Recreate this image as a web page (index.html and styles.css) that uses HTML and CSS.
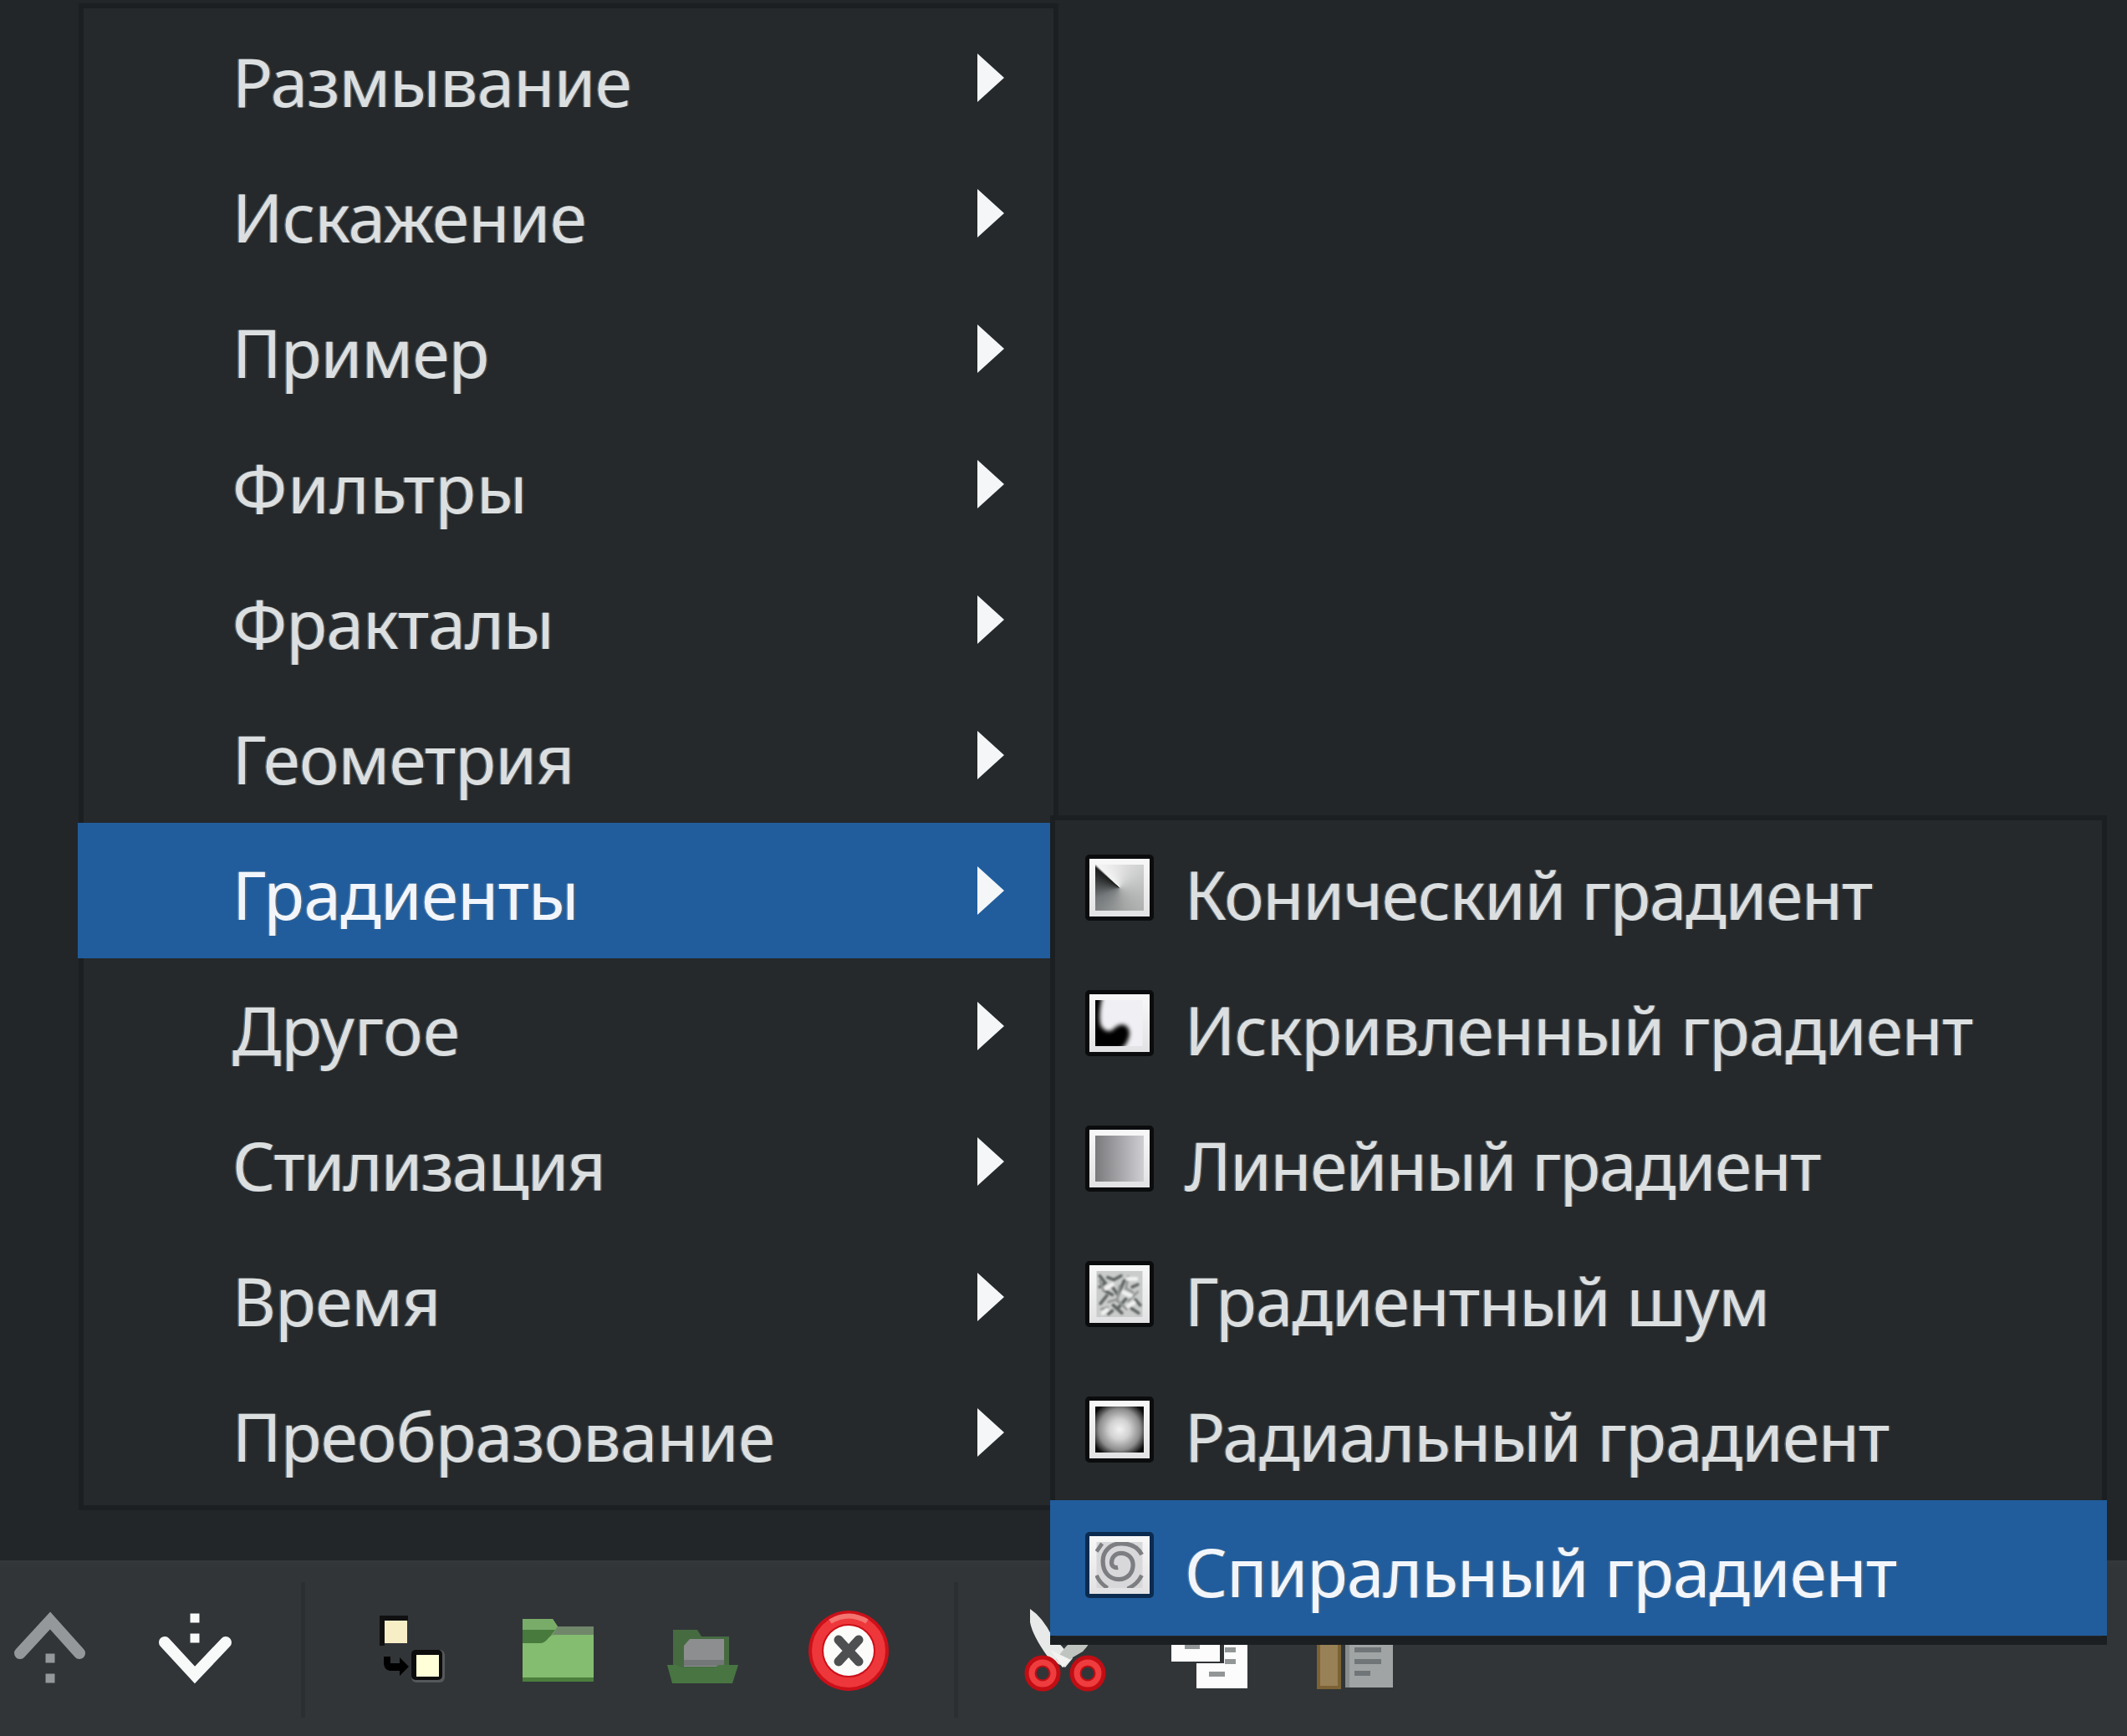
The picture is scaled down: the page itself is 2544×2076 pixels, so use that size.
FILE: index.html
```html
<!DOCTYPE html>
<html lang="ru">
<head>
<meta charset="utf-8">
<title>Градиенты</title>
<link rel="stylesheet" href="styles.css">
</head>
<body>
<div class="workspace"></div>

<div class="toolbar">
  <div class="tool"><svg class="tool-icon" viewBox="0 0 100 100"><path d="M15 53 51 14 86 53" fill="none" stroke="#94989a" stroke-width="14" stroke-linecap="round"/><path d="M45.500 53.500h11v11h-11zM45.500 77.500h11v11h-11z" fill="#94989a"/></svg></div>
  <div class="tool"><svg class="tool-icon" viewBox="0 0 100 100"><path d="M14 40 50 79 87 40" fill="none" stroke="#f8fafa" stroke-width="14" stroke-linecap="round"/><path d="M44.500 5.500h11v11h-11zM44.500 29.500h11v11h-11z" fill="#f8fafa"/></svg></div>
  <div class="separator"></div>
  <div class="tool"><svg class="tool-icon" viewBox="0 0 100 100"><path d="M12 8h34v6H18v30h-6z" fill="#101010"/><path d="M18 14h27v27H18z" fill="#f8eec6"/><rect x="50" y="49" width="40" height="39" rx="6" fill="#55585a"/><rect x="50" y="49" width="37" height="36" rx="5" fill="#0c0c0c"/><path d="M56 55h27v26H56z" fill="#ffffd8"/><path d="M17 57h8v8h11v-7l11 11-11 11v-6H24q-7-2-7-9z" fill="#000"/></svg></div>
  <div class="tool"><svg class="tool-icon" viewBox="0 0 100 100"><path d="M9 12h36l6 9h43v64H9z" fill="#6f9d5f"/><path d="M9 12h36l6 9-9 14H9z" fill="#79ac69"/><path d="M9 25h39l-12 16H9z" fill="#477a3c"/><path d="M51 21h43v10H45z" fill="#70876a"/><path d="M9 41h21q5 0 9-5t10-5h45v51H9z" fill="#84bc70"/><path d="M9 82h85v5H9z" fill="#4c7f3c"/></svg></div>
  <div class="tool"><svg class="tool-icon" viewBox="0 0 100 100"><path d="M15 25h29l5 8h33v40H15z" fill="#466b41"/><path d="M35 36h41v33H28V44z" fill="#8d8e90"/><path d="M28 61h48v7H28z" fill="#747777"/><path d="M8 67h11l6 3h39l6-3h23l-7 22H14z" fill="#487542"/></svg></div>
  <div class="tool"><svg class="tool-icon" viewBox="0 0 100 100"><circle cx="51" cy="50" r="48" fill="#cb1019"/><circle cx="51" cy="50" r="38" fill="none" stroke="#ee373b" stroke-width="12"/><path d="M29 15q22-13 44 0" fill="none" stroke="#f47470" stroke-width="6"/><circle cx="51" cy="50" r="30" fill="#fbfbf9"/><path d="M39 37 63 63M63 37 39 63" stroke="#4d4f51" stroke-width="11" stroke-linecap="round"/></svg></div>
  <div class="separator"></div>
  <div class="tool"><svg class="tool-icon" viewBox="0 0 100 100"><path d="M9 0Q24 10 35 32L60 59 51 70 39 64 30 57Q12 32 9 16z" fill="#e8eae9"/><path d="M93 2Q74 12 65 32L52 45 40 60 48 70 60 58 72 51Q90 32 93 2z" fill="#bfc4c0"/><path d="M33 49 58 61 48 70z" fill="#f2f3f1"/><circle cx="24" cy="77" r="14.500" fill="none" stroke="#c10d13" stroke-width="14"/><circle cx="24" cy="77" r="13" fill="none" stroke="#ef3d3f" stroke-width="7"/><circle cx="78" cy="77" r="14.500" fill="none" stroke="#c10d13" stroke-width="14"/><circle cx="78" cy="77" r="13" fill="none" stroke="#ef3d3f" stroke-width="7"/></svg></div>
  <div class="tool"><svg class="tool-icon" viewBox="0 0 100 100"><path d="M34 35h61v60H34z" fill="#fbfcfb"/><path d="M4 5h63v60H4z" fill="#2f3336"/><path d="M4 5h58v58H4z" fill="#fbfcfb"/><path d="M20 45h18M68 49h13M68 63h13M49 78h19" stroke="#929697" stroke-width="6"/></svg></div>
  <div class="tool"><svg class="tool-icon" viewBox="0 0 100 100"><path d="M4 5h29v91H4z" fill="#7c6234"/><path d="M8 5h21v87H8z" fill="#988057"/><path d="M38 30h57v64H38z" fill="#a1a4a5"/><path d="M38 30h5v64h-5z" fill="#898d8e"/><path d="M49 49h32M49 63h32M49 77h19" stroke="#707577" stroke-width="6"/></svg></div>
</div>

<ul class="menu menu-main">
  <li class="item"><span class="label">Размывание</span><svg class="arrow" viewBox="0 0 36 62"><path d="M2 2 34 31 2 60z"/></svg></li>
  <li class="item"><span class="label">Искажение</span><svg class="arrow" viewBox="0 0 36 62"><path d="M2 2 34 31 2 60z"/></svg></li>
  <li class="item"><span class="label">Пример</span><svg class="arrow" viewBox="0 0 36 62"><path d="M2 2 34 31 2 60z"/></svg></li>
  <li class="item"><span class="label loose">Фильтры</span><svg class="arrow" viewBox="0 0 36 62"><path d="M2 2 34 31 2 60z"/></svg></li>
  <li class="item"><span class="label">Фракталы</span><svg class="arrow" viewBox="0 0 36 62"><path d="M2 2 34 31 2 60z"/></svg></li>
  <li class="item"><span class="label">Геометрия</span><svg class="arrow" viewBox="0 0 36 62"><path d="M2 2 34 31 2 60z"/></svg></li>
  <li class="item selected"><span class="label">Градиенты</span><svg class="arrow" viewBox="0 0 36 62"><path d="M2 2 34 31 2 60z"/></svg></li>
  <li class="item"><span class="label normal">Другое</span><svg class="arrow" viewBox="0 0 36 62"><path d="M2 2 34 31 2 60z"/></svg></li>
  <li class="item"><span class="label tightest">Стилизация</span><svg class="arrow" viewBox="0 0 36 62"><path d="M2 2 34 31 2 60z"/></svg></li>
  <li class="item"><span class="label">Время</span><svg class="arrow" viewBox="0 0 36 62"><path d="M2 2 34 31 2 60z"/></svg></li>
  <li class="item"><span class="label">Преобразование</span><svg class="arrow" viewBox="0 0 36 62"><path d="M2 2 34 31 2 60z"/></svg></li>
</ul>

<ul class="menu menu-sub">
  <li class="item"><span class="thumb conical"></span><span class="label tight">Конический градиент</span></li>
  <li class="item"><span class="thumb"><svg class="art" viewBox="0 0 58 58"><defs><filter id="soft"><feGaussianBlur stdDeviation="3"/></filter></defs><path d="M0 0h58v58H0z" fill="#f0f0f4"/><path d="M-6-6H8Q2 16 5 31 11 42 20 38 30 27 38 33 46 41 36 57L30 62H-6z" fill="#000" filter="url(#soft)"/></svg></span><span class="label">Искривленный градиент</span></li>
  <li class="item"><span class="thumb linear"></span><span class="label tighter">Линейный градиент</span></li>
  <li class="item"><span class="thumb"><svg class="art" viewBox="0 0 58 58"><defs><filter id="grain"><feGaussianBlur stdDeviation="0.9"/></filter></defs><path d="M0 0h58v58H0z" fill="#cacccb"/><g filter="url(#grain)" fill="none" stroke-linecap="round"><path d="M14 8 22 11 31 6M4 6 11 15 4 20M20 20 27 30 35 12M45 20 52 17M5 41 13 31M9 24 20 30M37 35 27 47M44 47 53 53M32 53 21 43M49 36 55 43M15 54 20 50" stroke="#626766" stroke-width="4"/><path d="M4 12 9 25M40 7 37 22 46 27M15 39 25 36 38 48M52 26 40 38M6 48 14 46M29 19 26 38" stroke="#929695" stroke-width="3"/><path d="M40 10 50 10M20 17 12 22M47 40 40 44M8 53 13 49M34 27 43 31" stroke="#f0f1f0" stroke-width="5"/></g></svg></span><span class="label">Градиентный шум</span></li>
  <li class="item"><span class="thumb radial"></span><span class="label">Радиальный градиент</span></li>
  <li class="item selected"><span class="thumb"><svg class="art" viewBox="0 0 58 58"><path d="M0 0h58v58H0z" fill="#d8d8da"/><path d="M57 16C52 6 42 2 31 2 17 2 8 12 8 24 8 38 16 47 28 47 39 47 46 39 46 29 46 20 39 14 31 14 24 14 19 19 19 26 19 30 22 33 27 32" fill="none" stroke="#7c7e81" stroke-width="5.500"/><path d="M57 42Q51 54 39 59M0 42Q4 52 14 58M0 12 7 2" fill="none" stroke="#7c7e81" stroke-width="5"/></svg></span><span class="label">Спиральный градиент</span></li>
</ul>
</body>
</html>
```
FILE: styles.css
```css
* { box-sizing: border-box; }

body {
  margin: 0;
  width: 2544px;
  height: 2076px;
  position: relative;
  overflow: hidden;
  display: flex;
  flex-direction: column;
  background: #222629;
  font-family: "Noto Sans", "Open Sans", sans-serif;
}

.workspace { flex: 1; }

/* bottom toolbar */
.toolbar {
  height: 210px;
  display: flex;
  align-items: flex-start;
  padding-top: 26px;
  background: linear-gradient(#34383a, #313538 10px);
}
.tool {
  flex: none;
  width: 174px;
  height: 164px;
  display: flex;
  align-items: center;
  justify-content: center;
}
.tool:first-child { margin-left: -28px; }
.tool-icon { width: 100px; height: 100px; }
.separator {
  flex: none;
  width: 85px;
  height: 162px;
  display: flex;
  justify-content: center;
}
.separator::before { content: ""; width: 5px; background: #2b2f32; }

/* popup menus */
.menu {
  position: absolute;
  margin: 0;
  list-style: none;
  background: #25292b;
  border: 6px solid #1b1f21;
}
.menu-main {
  left: 94px;
  top: 4px;
  width: 1172px;
  height: 1802px;
  padding: 2px 0 0;
}
.menu-sub {
  left: 1256px;
  top: 975px;
  width: 1264px;
  height: 992px;
  padding: 3px 0 0;
  border-bottom-width: 10px;
}
.item {
  height: 162px;
  display: flex;
  align-items: flex-start;
  color: #dcdfe0;
  font-size: 80px;
  line-height: 110px;
  white-space: nowrap;
}
.menu-main .item { margin: 0 4px 0 -7px; padding: 0 53px 0 185px; }
.menu-sub .item { margin: 0 -6px; padding-left: 42px; }
.label {
  padding-top: 30px;
  letter-spacing: -0.75px;
  /* colour fringes of subpixel-smoothed text */
  text-shadow: -1.5px 0 rgba(100, 165, 225, 0.5), 1.5px 0 rgba(180, 120, 70, 0.5);
}
.menu-sub .label { letter-spacing: -1px; }
.menu-sub .tight { letter-spacing: -1.2px; }
.menu-sub .tighter { letter-spacing: -1.5px; }
.tightest { letter-spacing: -1.8px; }
.normal { letter-spacing: 0.2px; }
.loose { letter-spacing: 0.9px; }
.selected { background: #215d9c; color: #f2f6fb; }

.arrow {
  width: 36px;
  height: 62px;
  margin: 50px 0 0 auto;
  fill: #f4f6f8;
}

/* gradient thumbnails */
.thumb {
  flex: none;
  width: 82px;
  height: 79px;
  margin: 38px 37px 0 0;
  border: 5px solid #0b0c0d;
  border-radius: 5px;
  padding: 7px;
  background: linear-gradient(#f8f8f8, #e2e2e4) padding-box;
}
.selected .thumb { border-color: #0c2b50; }
.art { display: block; width: 58px; height: 55px; }
.thumb::before { content: ""; display: none; height: 55px; }
.conical::before {
  display: block;
  background: conic-gradient(from -45deg, #f4f4f4, #c8cac9 110deg, #a4a6a5 210deg, #74787a 290deg, #1b1c1c 355deg, #f4f4f4);
}
.linear::before {
  display: block;
  background: linear-gradient(90deg, #7a7a7d, #cfcfd3);
}
.radial::before {
  display: block;
  background: radial-gradient(circle, #f2f2f2, #d2d2d2 30%, #8c8c8c 62%, #0a0a0a 88%);
}
```
